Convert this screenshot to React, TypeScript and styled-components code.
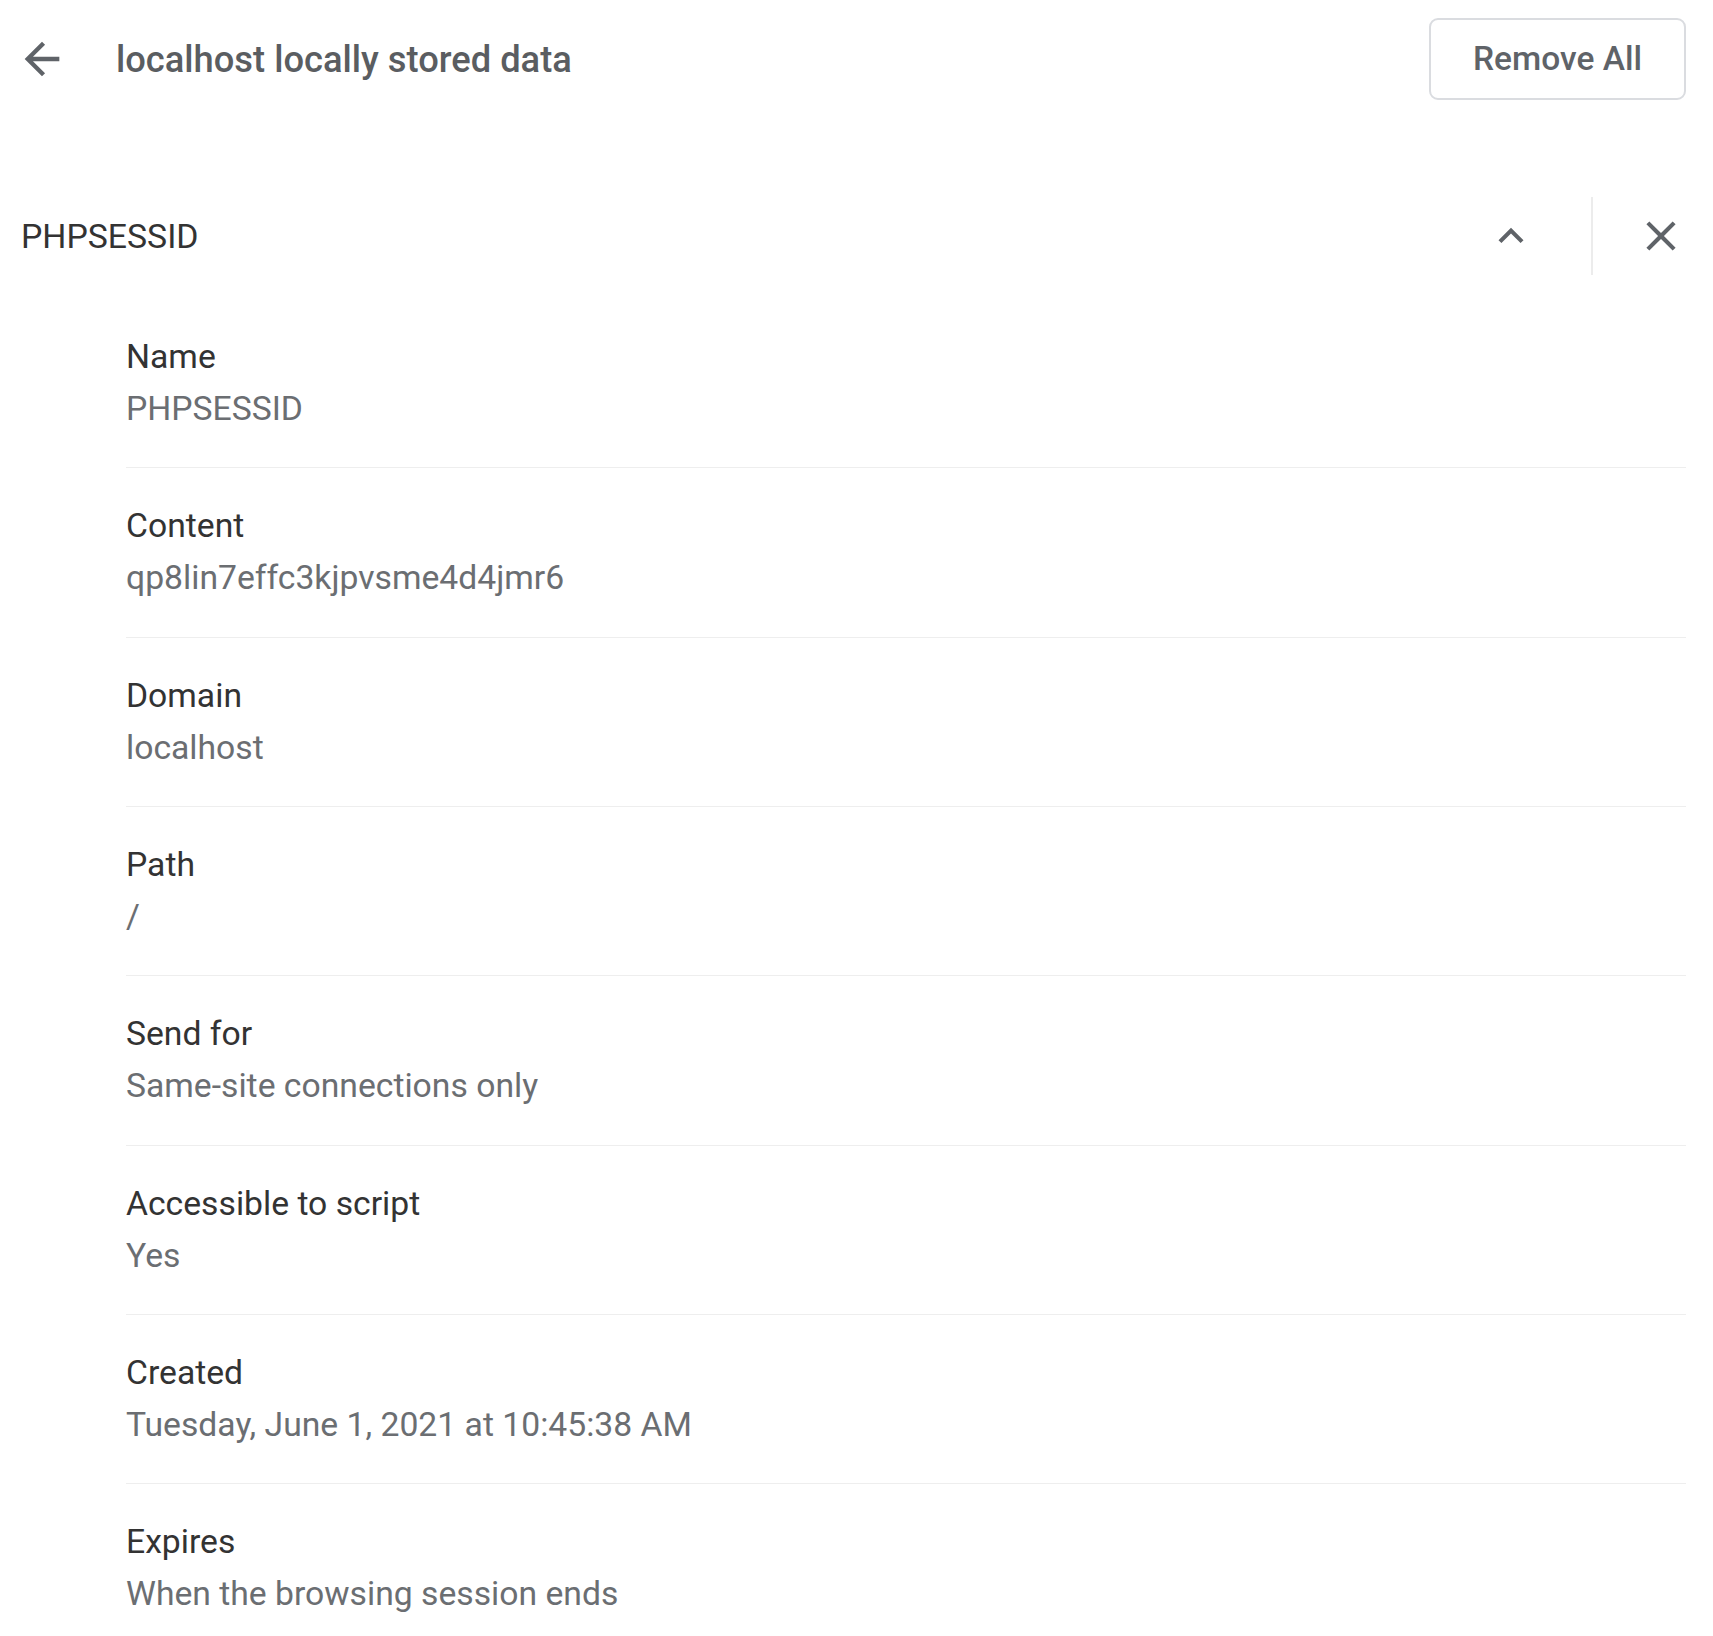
import React from "react";
import styled, { createGlobalStyle } from "styled-components";

const Global = createGlobalStyle`
  html, body { margin: 0; padding: 0; background: #ffffff; }
  body { font-family: Roboto, "Noto Sans", "Liberation Sans", sans-serif; }
`;

const Page = styled.div`
  padding: 0 27px 0 16px;
  box-sizing: border-box;
  width: 1713px;
`;

const TopBar = styled.div`
  display: flex;
  align-items: center;
  height: 118px;
`;

const IconButton = styled.button<{ $size?: number }>`
  display: flex;
  align-items: center;
  justify-content: center;
  width: ${(p) => p.$size ?? 52}px;
  height: ${(p) => p.$size ?? 52}px;
  padding: 0;
  border: none;
  background: transparent;
  color: #5f6368;
  flex: none;
  svg { width: 100%; height: 100%; fill: currentColor; display: block; }
`;

const Title = styled.h1`
  margin: 0 0 0 48px;
  flex: 1;
  font-size: 36.3px;
  font-weight: 500;
  color: #5a5d61;
  letter-spacing: 0;
`;

const OutlineButton = styled.button`
  height: 82px;
  width: 257px;
  margin-top: -1px;
  border: 2px solid #dadce0;
  border-radius: 9px;
  background: #fff;
  color: #5f6368;
  font-family: Roboto, "Noto Sans", sans-serif;
  font-size: 33.5px;
  font-weight: 500;
`;

const CookieHeader = styled.div`
  display: flex;
  align-items: center;
  height: 120px;
  margin-top: 58px;
  padding-left: 5px;
`;

const CookieName = styled.div`
  flex: 1;
  font-size: 33.8px;
  color: #333333;
`;

const Separator = styled.div`
  width: 2px;
  height: 78px;
  background: #ececec;
  margin: 0 43px 0 55px;
`;

const Details = styled.div`
  padding-left: 110px;
  padding-top: 3px;
`;

const Row = styled.div<{ $last?: boolean }>`
  padding: 32px 0 32.35px;
  border-bottom: ${(p) => (p.$last ? "none" : "1px solid #eeeeee")};
`;

const Label = styled.div`
  font-size: 33.7px;
  line-height: 52px;
  color: #333333;
`;

const Value = styled.div`
  font-size: 33.7px;
  line-height: 52px;
  color: #6b6e72;
`;

const ArrowBack = () => (
  <svg viewBox="0 0 24 24">
    <path d="M20 11H7.83l5.59-5.59L12 4l-8 8 8 8 1.41-1.41L7.83 13H20v-2z" />
  </svg>
);

const ExpandLess = () => (
  <svg viewBox="0 0 24 24">
    <path d="M12 8l-6 6 1.41 1.41L12 10.83l4.59 4.58L18 14z" />
  </svg>
);

const Close = () => (
  <svg viewBox="0 0 24 24">
    <path d="M19 6.41L17.59 5 12 10.59 6.41 5 5 6.41 10.59 12 5 17.59 6.41 19 12 13.41 17.59 19 19 17.59 13.41 12z" />
  </svg>
);

const rows: [string, string][] = [
  ["Name", "PHPSESSID"],
  ["Content", "qp8lin7effc3kjpvsme4d4jmr6"],
  ["Domain", "localhost"],
  ["Path", "/"],
  ["Send for", "Same-site connections only"],
  ["Accessible to script", "Yes"],
  ["Created", "Tuesday, June 1, 2021 at 10:45:38 AM"],
  ["Expires", "When the browsing session ends"],
];

export default function App() {
  return (
    <>
      <Global />
      <Page>
        <TopBar>
          <IconButton $size={52} aria-label="Back">
            <ArrowBack />
          </IconButton>
          <Title>localhost locally stored data</Title>
          <OutlineButton>Remove All</OutlineButton>
        </TopBar>
        <CookieHeader>
          <CookieName>PHPSESSID</CookieName>
          <IconButton $size={50} aria-label="Collapse">
            <ExpandLess />
          </IconButton>
          <Separator />
          <IconButton $size={50} aria-label="Remove">
            <Close />
          </IconButton>
        </CookieHeader>
        <Details>
          {rows.map(([label, value], i) => (
            <Row key={label} $last={i === rows.length - 1}>
              <Label>{label}</Label>
              <Value>{value}</Value>
            </Row>
          ))}
        </Details>
      </Page>
    </>
  );
}
